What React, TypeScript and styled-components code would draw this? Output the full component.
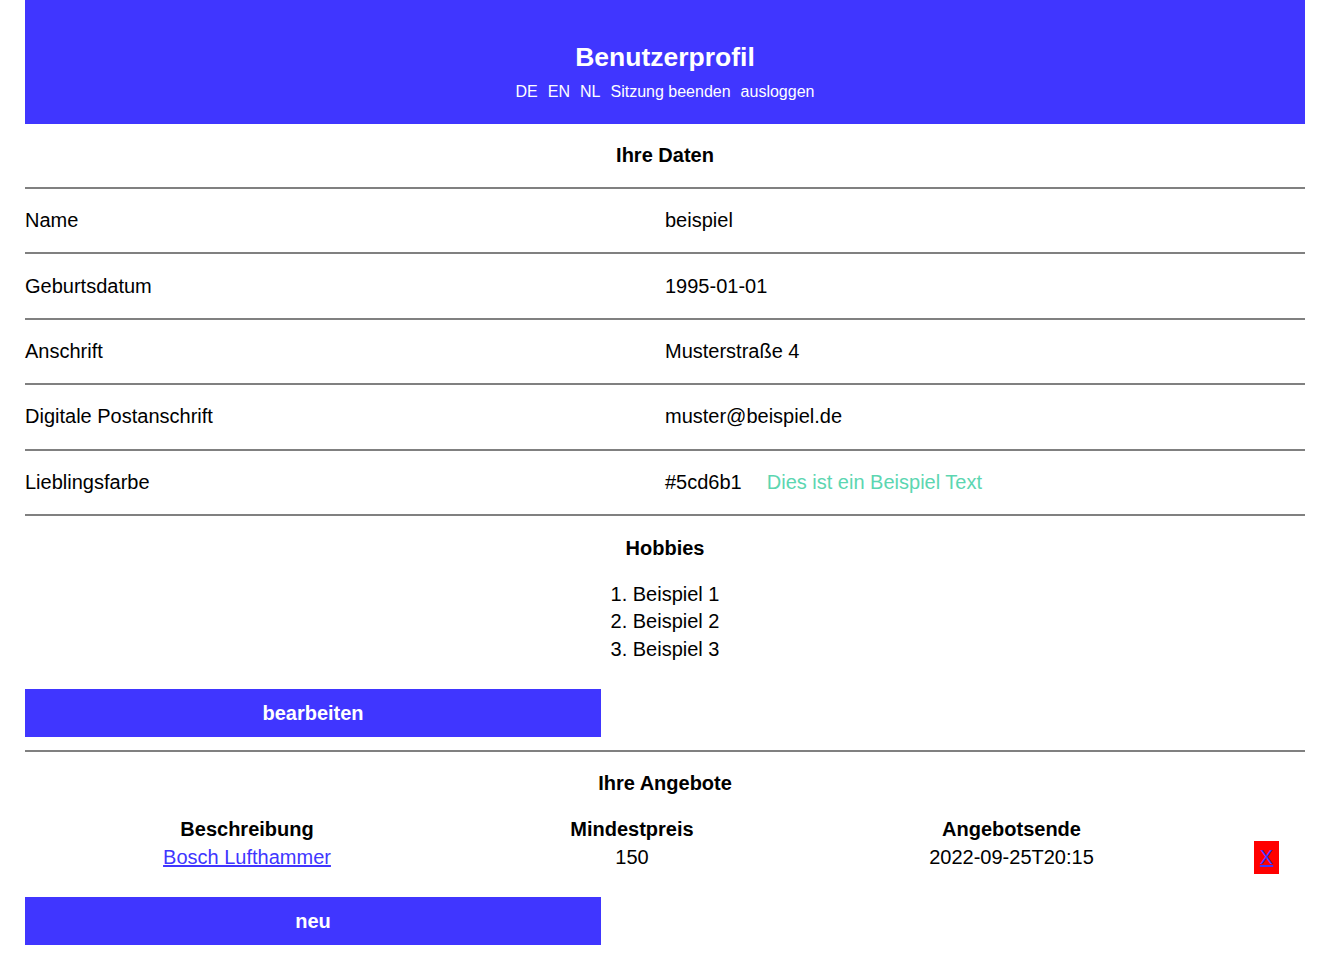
import styled, { createGlobalStyle } from 'styled-components';

const BLUE = '#4036ff';
const LINE = '#808080';

const GlobalStyle = createGlobalStyle`
  html, body {
    margin: 0;
    padding: 0;
    background: #ffffff;
  }
  body {
    font-family: 'Liberation Sans', Arial, sans-serif;
    font-size: 20px;
    color: #000000;
  }
`;

const Page = styled.div`
  padding: 0 25px 30px;
`;

const Header = styled.header`
  background: ${BLUE};
  color: #ffffff;
  height: 124px;
  box-sizing: border-box;
  padding-top: 42px;
  display: flex;
  flex-direction: column;
  align-items: center;
`;

const Title = styled.h1`
  margin: 0;
  font-size: 26.5px;
  line-height: 31px;
  font-weight: 700;
`;

const Nav = styled.nav`
  margin-top: 10px;
  display: flex;
  gap: 10px;
  font-size: 16px;
  line-height: 18px;
`;

const NavLink = styled.a`
  color: #ffffff;
  text-decoration: none;
  cursor: pointer;
`;

const SectionTitle = styled.h2<{ $bordered?: boolean; $height?: number }>`
  margin: 0;
  height: ${(p) => p.$height ?? 63}px;
  display: flex;
  align-items: center;
  justify-content: center;
  font-size: 20px;
  font-weight: 700;
  box-sizing: border-box;
  border-bottom: ${(p) => (p.$bordered ? `2px solid ${LINE}` : 'none')};
`;

const DataRow = styled.div`
  display: grid;
  grid-template-columns: 1fr 1fr;
  height: 65.4px;
  box-sizing: border-box;
  border-bottom: 2px solid ${LINE};
  align-items: center;
`;

const Label = styled.div`
  line-height: 23px;
`;

const Value = styled.div`
  display: flex;
  gap: 25px;
  line-height: 23px;
`;

const Swatch = styled.span<{ $color: string }>`
  color: ${(p) => p.$color};
`;

const HobbyList = styled.ol`
  margin: 0;
  padding: 0;
  list-style-position: inside;
  text-align: center;
  line-height: 27.5px;
`;

const ActionButton = styled.button`
  display: block;
  width: 45%;
  height: 48px;
  border: none;
  background: ${BLUE};
  color: #ffffff;
  font-family: inherit;
  font-size: 20px;
  font-weight: 700;
  cursor: pointer;
`;

const EditButton = styled(ActionButton)`
  margin-top: 26px;
  margin-bottom: 13px;
`;

const NewButton = styled(ActionButton)`
  margin-top: 23px;
`;

const Divider = styled.hr`
  margin: 0;
  border: none;
  border-top: 2px solid ${LINE};
`;

const OfferTable = styled.div`
  display: grid;
  grid-template-columns: 444px 326px 433px 1fr;
  text-align: center;
  margin-top: 2px;
`;

const HeadCell = styled.div`
  font-weight: 700;
  line-height: 23px;
  padding: 0.5px 0;
`;

const Cell = styled.div`
  display: flex;
  align-items: center;
  justify-content: center;
  line-height: 23px;
  min-height: 33px;
`;

const OfferLink = styled.a`
  color: ${BLUE};
  text-decoration: underline;
  cursor: pointer;
`;

const DeleteButton = styled.button`
  background: #ff0000;
  border: none;
  padding: 5px 6px;
  font-family: inherit;
  font-size: 20px;
  line-height: 23px;
  cursor: pointer;
`;

const DeleteLink = styled.a`
  color: ${BLUE};
  text-decoration: underline;
`;

const profile = [
  { label: 'Name', value: 'beispiel' },
  { label: 'Geburtsdatum', value: '1995-01-01' },
  { label: 'Anschrift', value: 'Musterstraße 4' },
  { label: 'Digitale Postanschrift', value: 'muster@beispiel.de' },
];

const favouriteColor = '#5cd6b1';
const hobbies = ['Beispiel 1', 'Beispiel 2', 'Beispiel 3'];

export default function App() {
  return (
    <>
      <GlobalStyle />
      <Page>
        <Header>
          <Title>Benutzerprofil</Title>
          <Nav>
            <NavLink>DE</NavLink>
            <NavLink>EN</NavLink>
            <NavLink>NL</NavLink>
            <NavLink>Sitzung beenden</NavLink>
            <NavLink>ausloggen</NavLink>
          </Nav>
        </Header>

        <SectionTitle $bordered $height={65}>
          Ihre Daten
        </SectionTitle>
        {profile.map((row) => (
          <DataRow key={row.label}>
            <Label>{row.label}</Label>
            <Value>{row.value}</Value>
          </DataRow>
        ))}
        <DataRow>
          <Label>Lieblingsfarbe</Label>
          <Value>
            <span>{favouriteColor}</span>
            <Swatch $color={favouriteColor}>Dies ist ein Beispiel Text</Swatch>
          </Value>
        </DataRow>

        <SectionTitle $height={65}>Hobbies</SectionTitle>
        <HobbyList>
          {hobbies.map((h) => (
            <li key={h}>{h}</li>
          ))}
        </HobbyList>
        <EditButton>bearbeiten</EditButton>
        <Divider />

        <SectionTitle>Ihre Angebote</SectionTitle>
        <OfferTable>
          <HeadCell>Beschreibung</HeadCell>
          <HeadCell>Mindestpreis</HeadCell>
          <HeadCell>Angebotsende</HeadCell>
          <HeadCell />
          <Cell>
            <OfferLink>Bosch Lufthammer</OfferLink>
          </Cell>
          <Cell>150</Cell>
          <Cell>2022-09-25T20:15</Cell>
          <Cell>
            <DeleteButton>
              <DeleteLink>X</DeleteLink>
            </DeleteButton>
          </Cell>
        </OfferTable>
        <NewButton>neu</NewButton>
      </Page>
    </>
  );
}
